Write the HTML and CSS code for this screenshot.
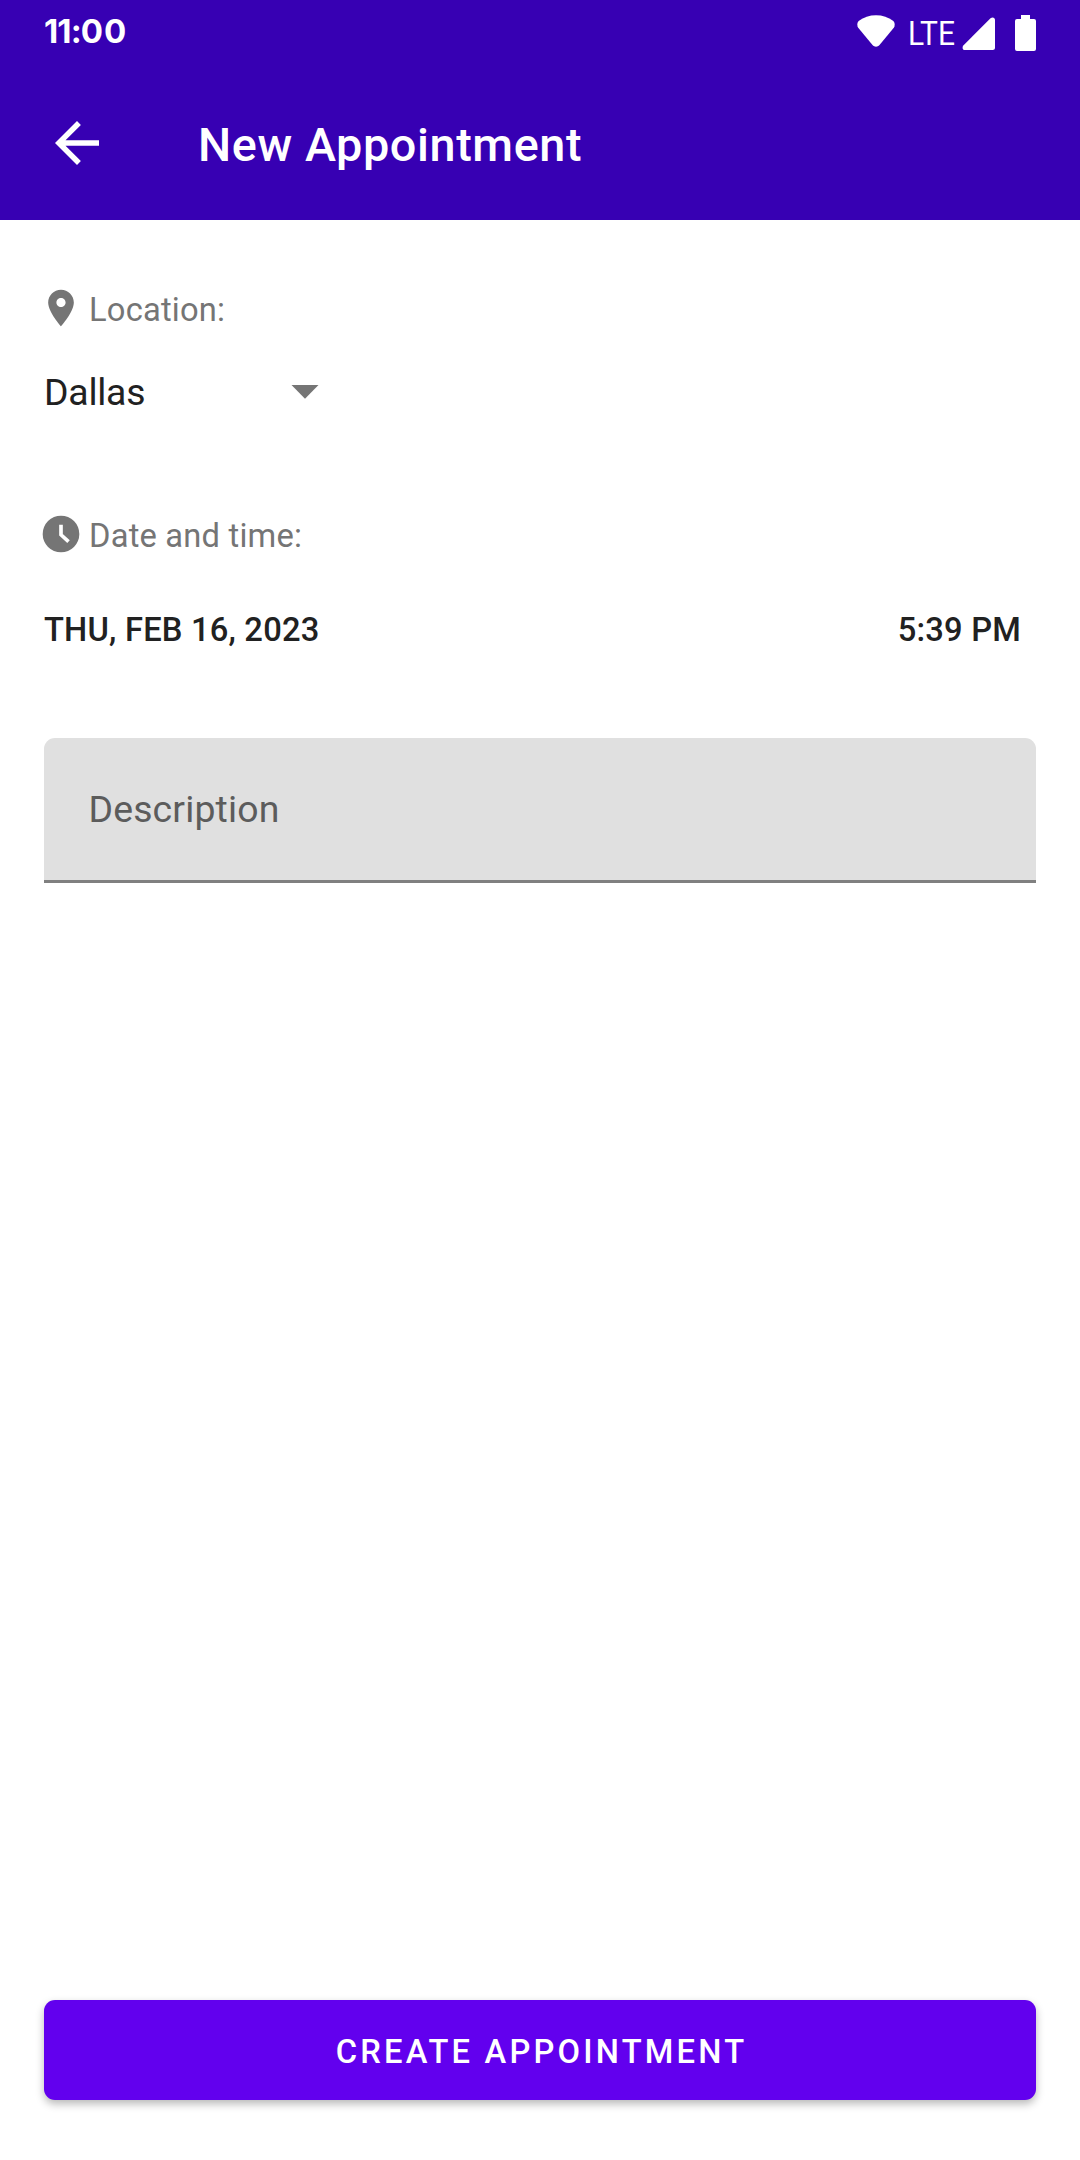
FILE: index.html
```html
<!DOCTYPE html>
<html lang="en">
<head>
<meta charset="utf-8">
<title>New Appointment</title>
<link rel="stylesheet" href="styles.css">
</head>
<body>
<div class="screen">
  <header class="header">
    <div class="status-bar">
      <div class="clock"><span class="clock-hour">11:</span><span class="clock-minute">00</span></div>
      <div class="status-icons">
        <svg class="wifi" width="38" height="34" viewBox="0 0 38 34"><path d="M19 .3C12.500 .3 6.500 2.300 2 5.800C-.2 7.800 0 10.800 1.200 12.800L15.500 30C17.500 32.300 20.500 32.300 22.500 30L36.800 12.800C38 10.800 38.200 7.800 36 5.800C31.500 2.300 25.500 .3 19 .3Z"/></svg>
        <svg class="lte" width="50" height="44" viewBox="0 0 50 44"><text x="0" y="29.500" textLength="47" lengthAdjust="spacingAndGlyphs">LTE</text></svg>
        <svg class="signal" width="34" height="34" viewBox="0 0 34 34"><path d="M28.500 1.300C30.500-.4 33 .5 33 3V30.500Q33 33 30.500 33H3C.5 33 0 30.500 1.300 28.500Z"/></svg>
        <svg class="battery" width="21" height="36" viewBox="0 0 21 36"><path d="M6 0H15V4H19Q21 4 21 6V34Q21 36 19 36H2Q0 36 0 34V6Q0 4 2 4H6Z"/></svg>
      </div>
    </div>
    <div class="toolbar">
      <svg class="back" width="66" height="66" viewBox="0 0 24 24"><path d="M20 11H7.830l5.590-5.590L12 4l-8 8 8 8 1.410-1.410L7.830 13H20v-2z"/></svg>
      <h1 class="title">New Appointment</h1>
    </div>
  </header>
  <main class="form">
    <div class="label">
      <svg class="label-icon" width="44" height="44" viewBox="0 0 24 24"><path d="M12 2C8.130 2 5 5.130 5 9c0 5.250 7 13 7 13s7-7.750 7-13c0-3.870-3.130-7-7-7zm0 9.500c-1.380 0-2.500-1.120-2.500-2.500s1.120-2.500 2.500-2.500 2.500 1.120 2.500 2.500-1.120 2.500-2.500 2.500z"/></svg>
      <span class="label-text">Location:</span>
    </div>
    <div class="spinner">
      <span class="spinner-value">Dallas</span>
      <svg class="caret" width="28" height="14" viewBox="0 0 28 14"><path d="M.5 0H27.500L14 13.700Z"/></svg>
    </div>
    <div class="label label-date">
      <svg class="label-icon" width="44" height="44" viewBox="0 0 24 24"><circle cx="12" cy="12" r="10"/><path class="hands" d="M12 7V12.400L16.100 16.200"/></svg>
      <span class="label-text">Date and time:</span>
    </div>
    <div class="when">
      <span class="date">THU, FEB 16, 2023</span>
      <span class="time">5:39 PM</span>
    </div>
    <div class="field"><span class="hint">Description</span></div>
    <button class="submit" type="button">CREATE APPOINTMENT</button>
  </main>
</div>
</body>
</html>
```
FILE: styles.css
```css
* { box-sizing: border-box; }
body { margin: 0; background: #fff; font-family: Roboto, sans-serif; }
svg { display: block; flex: none; }
.screen { width: 1080px; height: 2160px; display: flex; flex-direction: column; background: #fff; }
.header { height: 220px; background: #3700b3; color: #fff; fill: #fff; }
.status-bar { height: 66px; padding: 0 44px; display: flex; justify-content: space-between; align-items: flex-start; }
.clock { font: 700 33px/38px Inter, sans-serif; padding-top: 12px; }
.clock-hour { letter-spacing: -.9px; }
.clock-minute { letter-spacing: .9px; }
.status-icons { display: flex; align-items: flex-start; padding-top: 15px; }
.lte { margin-left: 13px; font-size: 33px; font-weight: 400; overflow: visible; }
.signal { margin: 2px 0 0 4px; }
.battery { margin-left: 19px; }
.toolbar { height: 154px; padding-left: 44px; display: flex; align-items: center; }
.title { margin: 3px 0 0 88px; font-size: 46.750px; font-weight: 500; line-height: 56px; letter-spacing: .6px; }
.form { flex: 1; padding: 66px 44px 60px; display: flex; flex-direction: column; }
.label { height: 44px; margin-left: -5px; display: flex; color: #757575; fill: #757575; }
.label-icon { margin-right: 6px; }
.hands { fill: none; stroke: #fff; stroke-width: 2; }
.label-text { font-size: 32.700px; line-height: 44px; padding-top: 2px; letter-spacing: .2px; }
.spinner { height: 66px; margin-top: 29px; width: 275px; display: flex; align-items: center; justify-content: space-between; color: #212121; fill: #757575; }
.spinner-value { font-size: 37.400px; line-height: 44px; letter-spacing: -.25px; }
.label-date { margin-top: 87px; }
.when { height: 44px; margin-top: 52px; padding-right: 15px; display: flex; justify-content: space-between; color: #212121; font-size: 32.700px; font-weight: 500; line-height: 44px; letter-spacing: .2px; }
.field { height: 145px; margin-top: 86px; padding: 0 44.500px; display: flex; align-items: center; background: #e0e0e0; border-bottom: 3px solid #808080; border-radius: 11px 11px 0 0; }
.hint { color: #5c5c5c; font-size: 37.400px; line-height: 44px; letter-spacing: .15px; }
.submit { height: 100px; margin-top: auto; padding: 4px 0 0 3px; border: 0; border-radius: 11px; background: #6200ee; color: #fff; font: 500 32.700px/44px Roboto, sans-serif; letter-spacing: 3.200px; box-shadow: 0 4px 8px rgba(0, 0, 0, .28); }
```
